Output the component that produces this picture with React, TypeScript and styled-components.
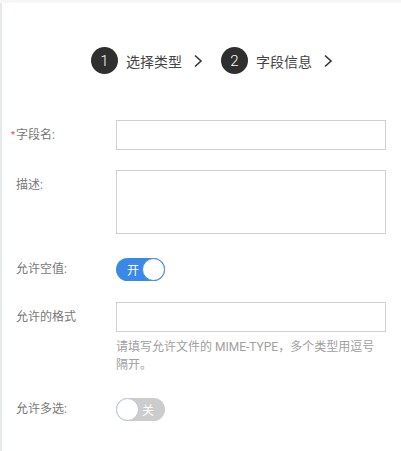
import React, { useState } from 'react'
import styled, { createGlobalStyle } from 'styled-components'

const GlobalStyle = createGlobalStyle`
  html, body {
    margin: 0;
    padding: 0;
    background: #f7f7f7;
  }
  body {
    font-family: Roboto, "Noto Sans CJK SC", "Noto Sans", sans-serif;
  }
`

const Page = styled.div`
  margin-top: 3px;
  height: 448px;
  background: #fff;
  border-left: 2px solid #e5e9ef;
  box-sizing: border-box;
  overflow: hidden;
`
const Steps = styled.div`
  display: flex;
  align-items: center;
  padding: 44px 0 0 89px;
  height: 27px;
`
const Step = styled.div`
  display: flex;
  align-items: center;
  margin-right: 18px;
`
const StepNum = styled.span`
  width: 27px;
  height: 27px;
  border-radius: 50%;
  background: #2f2f2f;
  color: #fff;
  font-size: 15px;
  font-weight: 300;
  display: flex;
  align-items: center;
  justify-content: center;
`
const StepText = styled.span`
  margin: 0 11px 0 8px;
  font-size: 14px;
  color: #444;
`
const Form = styled.div`
  padding-top: 46px;
`
const Row = styled.div<{ gap?: number }>`
  display: flex;
  align-items: flex-start;
  margin-bottom: ${({ gap }) => (gap !== undefined ? gap : 20)}px;
`
const Label = styled.label`
  width: 114px;
  padding-left: 14px;
  box-sizing: border-box;
  font-size: 12px;
  line-height: 30px;
  color: #777;
  display: flex;
  align-items: center;
`
const Star = styled.span`
  color: #e5484d;
  font-size: 9px;
  width: 5px;
  margin-left: -5px;
`
const Field = styled.div`
  width: 270px;
`
const Input = styled.input`
  display: block;
  width: 100%;
  height: 30px;
  box-sizing: border-box;
  border: 1px solid #cfcfcf;
  outline: none;
  padding: 0 8px;
  font-size: 12px;
`
const TextArea = styled.textarea`
  display: block;
  width: 100%;
  height: 64px;
  box-sizing: border-box;
  border: 1px solid #cfcfcf;
  outline: none;
  resize: none;
  padding: 6px 8px;
  font-size: 12px;
`
const Hint = styled.div`
  margin-top: 6px;
  max-width: 264px;
  font-size: 12px;
  line-height: 18px;
  color: #a0a0a0;
`
const SwitchBox = styled.div`
  padding-top: 4px;
`
const Toggle = styled.button<{ on: boolean }>`
  position: relative;
  width: 49px;
  height: 23px;
  border-radius: 12px;
  border: none;
  padding: 0;
  cursor: pointer;
  background: ${({ on }) => (on ? '#3a88e8' : '#cccccc')};
  color: #fff;
  font-size: 12px;
  font-family: "Noto Sans CJK SC", sans-serif;
`
const ToggleText = styled.span<{ on: boolean }>`
  position: absolute;
  top: 0;
  line-height: 23px;
  ${({ on }) => (on ? 'left: 11px;' : 'right: 11px;')}
`
const Knob = styled.span<{ on: boolean }>`
  position: absolute;
  top: 0;
  ${({ on }) => (on ? 'right: 0;' : 'left: 0;')}
  width: 23px;
  height: 23px;
  box-sizing: border-box;
  border-radius: 50%;
  background: #fff;
  border: 1px solid ${({ on }) => (on ? '#3a88e8' : '#b9c6da')};
`

const Chevron = () => (
  <svg width="10" height="14" viewBox="0 0 10 14">
    <polyline points="2,1.5 8,7 2,12.5" fill="none" stroke="#333" strokeWidth="1.6" />
  </svg>
)

const Switch = ({ on, onText, offText, onClick }: { on: boolean; onText: string; offText: string; onClick: () => void }) => (
  <Toggle on={on} onClick={onClick}>
    <ToggleText on={on}>{on ? onText : offText}</ToggleText>
    <Knob on={on} />
  </Toggle>
)

const App = () => {
  const [allowNull, setAllowNull] = useState(true)
  const [multi, setMulti] = useState(false)

  return (
    <>
      <GlobalStyle />
      <Page>
        <Steps>
          <Step>
            <StepNum>1</StepNum>
            <StepText>选择类型</StepText>
            <Chevron />
          </Step>
          <Step>
            <StepNum>2</StepNum>
            <StepText>字段信息</StepText>
            <Chevron />
          </Step>
        </Steps>
        <Form>
          <Row>
            <Label>
              <Star>*</Star>字段名:
            </Label>
            <Field>
              <Input />
            </Field>
          </Row>
          <Row>
            <Label>描述:</Label>
            <Field>
              <TextArea />
            </Field>
          </Row>
          <Row gap={17}>
            <Label>允许空值:</Label>
            <SwitchBox>
              <Switch on={allowNull} onText="开" offText="关" onClick={() => setAllowNull(!allowNull)} />
            </SwitchBox>
          </Row>
          <Row>
            <Label>允许的格式</Label>
            <Field>
              <Input />
              <Hint>请填写允许文件的 MIME-TYPE，多个类型用逗号隔开。</Hint>
            </Field>
          </Row>
          <Row>
            <Label>允许多选:</Label>
            <SwitchBox>
              <Switch on={multi} onText="开" offText="关" onClick={() => setMulti(!multi)} />
            </SwitchBox>
          </Row>
        </Form>
      </Page>
    </>
  )
}

export default App
